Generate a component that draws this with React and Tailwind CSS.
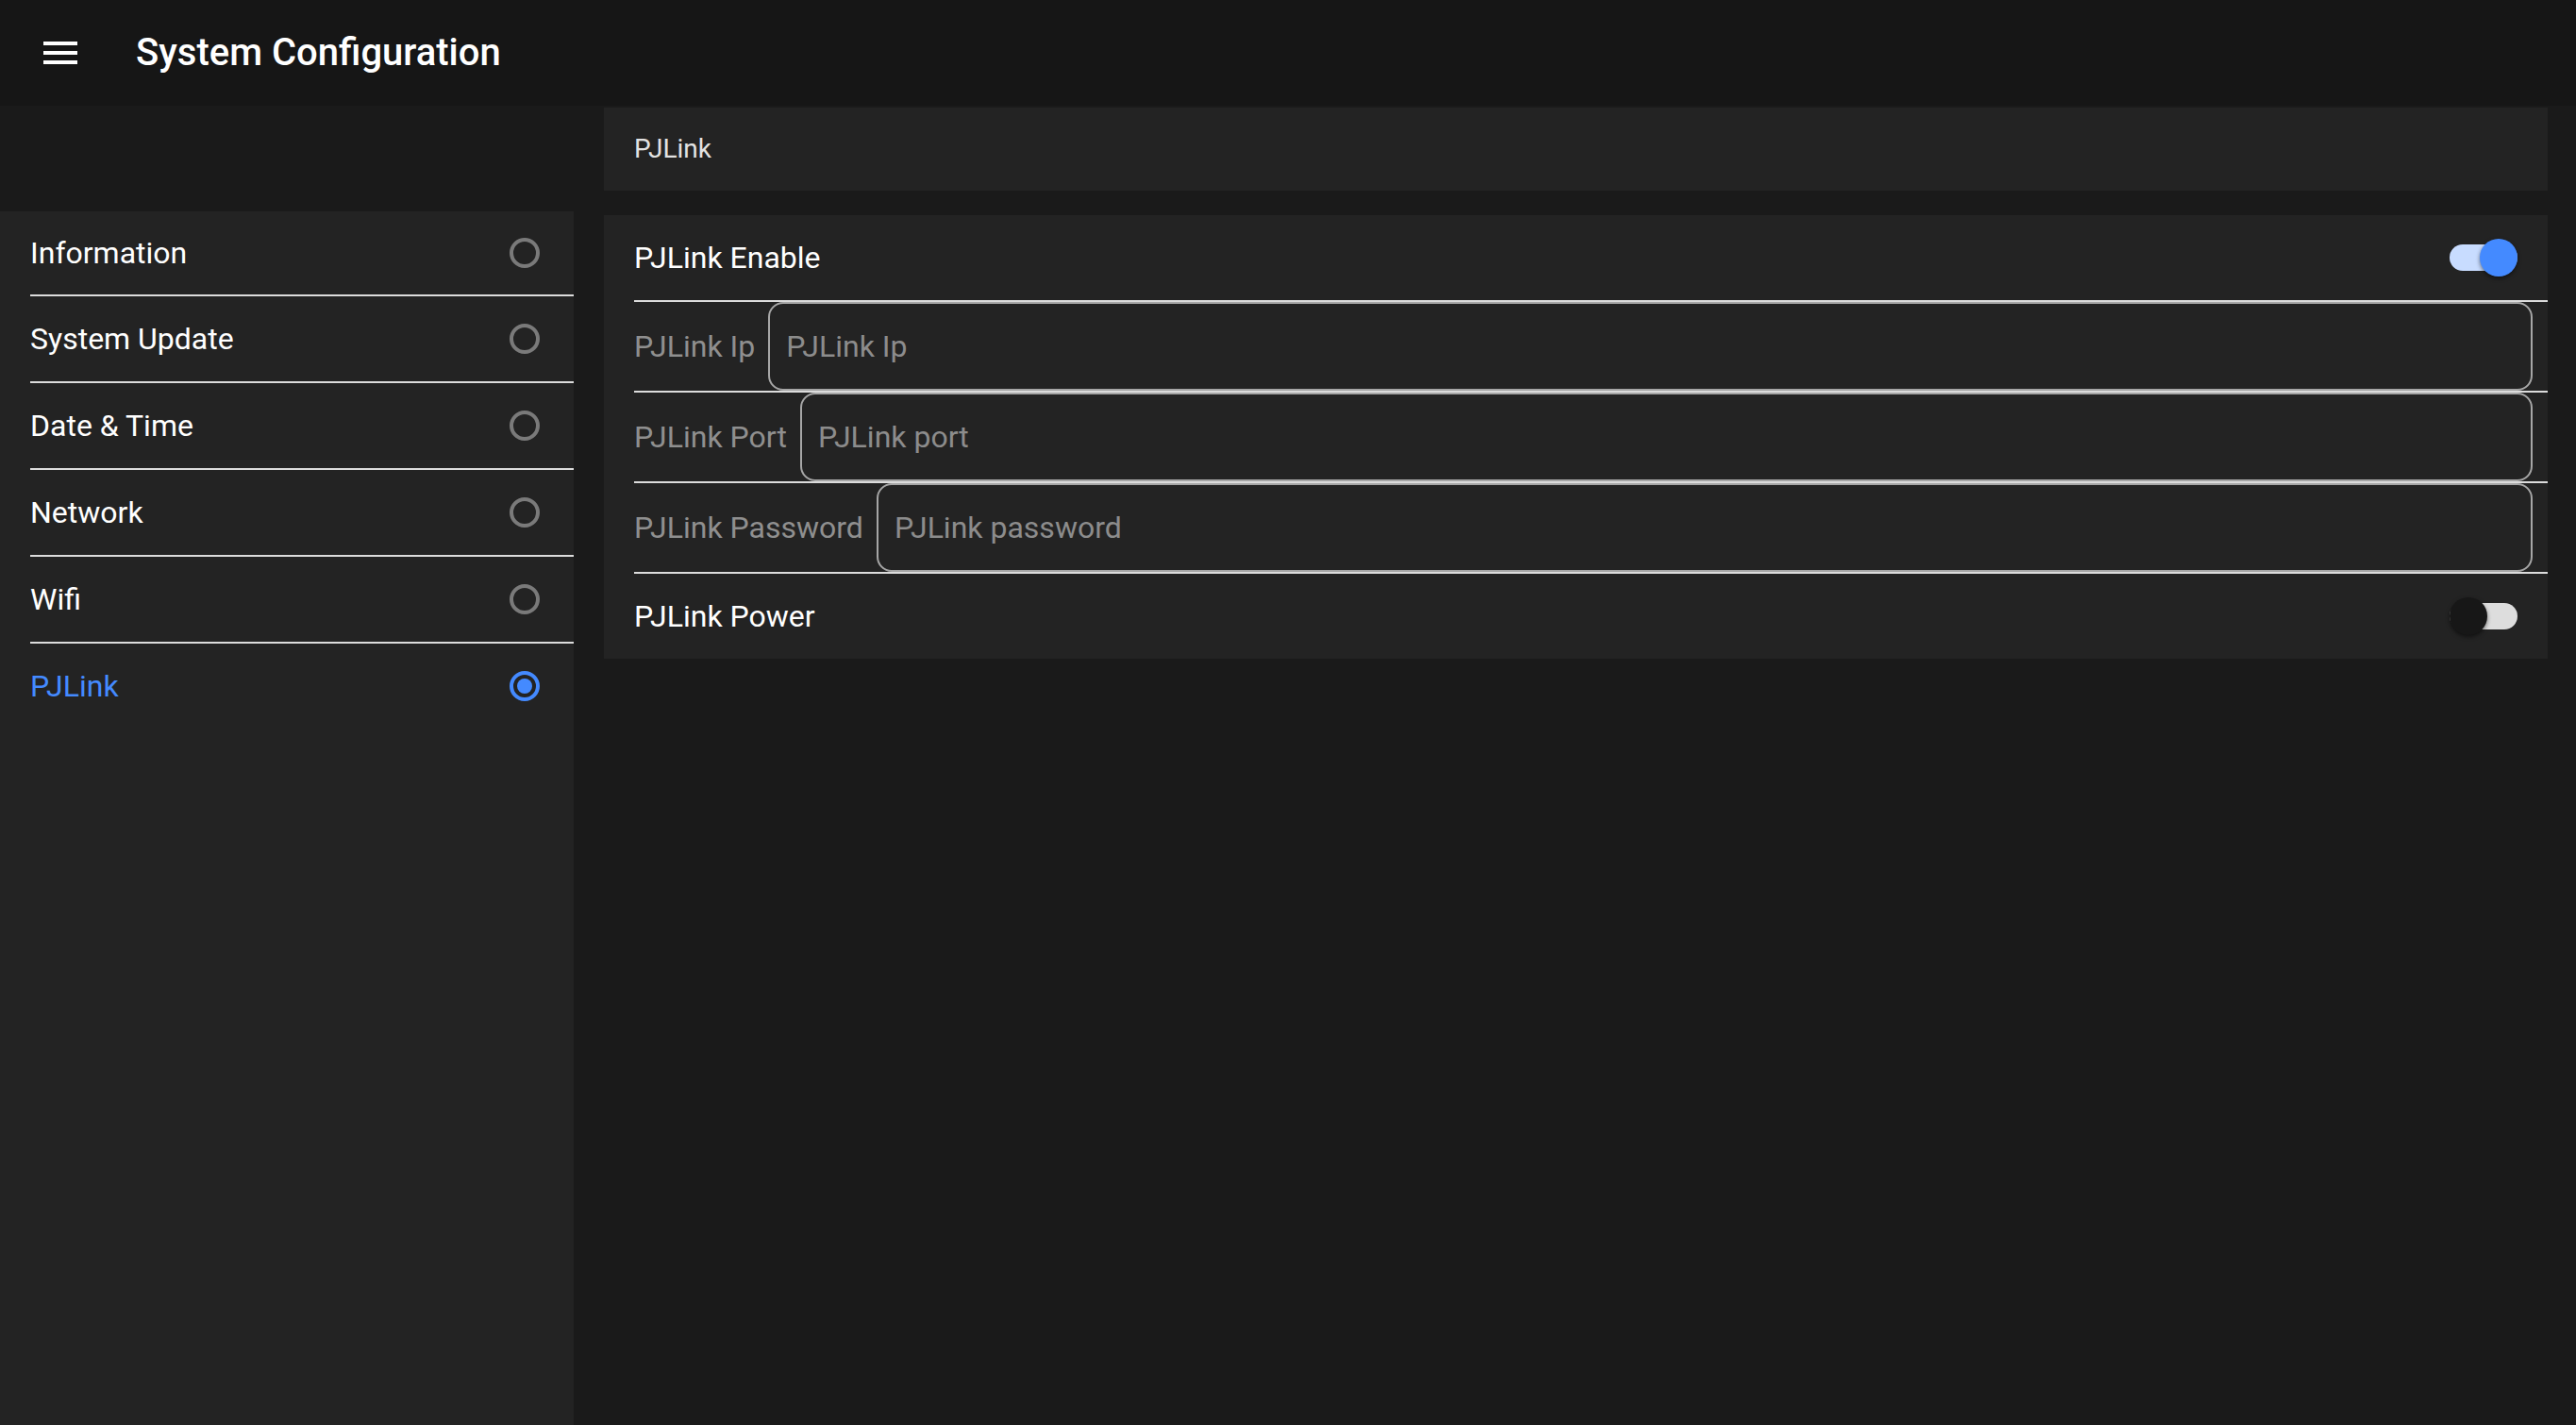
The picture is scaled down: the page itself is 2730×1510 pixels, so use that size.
import { useState } from 'react'

const menuItems = ['Information', 'System Update', 'Date & Time', 'Network', 'Wifi', 'PJLink']

function Radio({ selected }) {
  return (
    <div
      className={`w-[32px] h-[32px] rounded-full border-[4px] flex items-center justify-center ${
        selected ? 'border-[#448aff]' : 'border-[#7a7a7a]'
      }`}
    >
      {selected && <div className="w-[16px] h-[16px] rounded-full bg-[#448aff]" />}
    </div>
  )
}

function Toggle({ on }) {
  return (
    <div className="relative w-[72px] h-[40px] shrink-0">
      <div
        className={`absolute left-0 top-[6px] w-[72px] h-[28px] rounded-full ${
          on ? 'bg-[#c8dcff]' : 'bg-[#dddddd]'
        }`}
      />
      <div
        className={`absolute top-0 w-[40px] h-[40px] rounded-full shadow-[0_2px_4px_rgba(0,0,0,0.5)] ${
          on ? 'right-0 bg-[#448aff]' : 'left-0 bg-[#171717]'
        }`}
      />
    </div>
  )
}

function FieldRow({ label, placeholder }) {
  return (
    <div className="ml-[32px] h-[96px] border-b-2 border-[#dcdcdc] flex items-stretch gap-[14px]">
      <span className="self-center text-[32px] text-[#8f8f8f] whitespace-nowrap">{label}</span>
      <div className="flex-1 mr-[16px] rounded-[16px] border-2 border-[#a6a6a6] flex items-center pl-[17px]">
        <input
          className="w-full bg-transparent outline-none text-[32px] text-white placeholder:text-[#8c8c8c]"
          placeholder={placeholder}
        />
      </div>
    </div>
  )
}

function App() {
  const [selected] = useState('PJLink')

  return (
    <div className="h-screen w-full flex flex-col bg-[#1a1a1a] font-['Roboto','Liberation_Sans',sans-serif] overflow-hidden">
      {/* Header */}
      <div className="h-[112px] shrink-0 bg-[#161616] flex items-center">
        <svg className="ml-[40px] w-[48px] h-[48px]" viewBox="0 0 24 24" fill="#ffffff">
          <path d="M3 18h18v-2H3v2zm0-5h18v-2H3v2zm0-7v2h18V6H3z" />
        </svg>
        <h1 className="ml-[56px] text-[40px] font-medium text-white">System Configuration</h1>
      </div>

      <div className="flex-1 flex">
        {/* Sidebar */}
        <aside className="w-[608px] shrink-0 mt-[112px] bg-[#232323]">
          {menuItems.map((item, i) => {
            const active = item === selected
            const last = i === menuItems.length - 1
            return (
              <div
                key={item}
                className={`ml-[32px] pr-[36px] flex items-center justify-between ${
                  i === 0 ? 'h-[90px]' : last ? 'h-[90px]' : 'h-[92px]'
                } ${last ? '' : 'border-b-2 border-[#dcdcdc]'}`}
              >
                <span className={`text-[32px] ${active ? 'text-[#448aff]' : 'text-white'}`}>{item}</span>
                <Radio selected={active} />
              </div>
            )
          })}
        </aside>

        {/* Content */}
        <main className="flex-1 pl-[32px] pr-[30px] pt-[2px]">
          <div className="h-[88px] bg-[#232323] flex items-center pl-[32px]">
            <span className="text-[28px] text-[#e2e2e2]">PJLink</span>
          </div>

          <div className="mt-[26px] bg-[#232323]">
            <div className="ml-[32px] h-[92px] border-b-2 border-[#dcdcdc] flex items-center justify-between pr-[32px]">
              <span className="text-[32px] text-white">PJLink Enable</span>
              <Toggle on />
            </div>
            <FieldRow label="PJLink Ip" placeholder="PJLink Ip" />
            <FieldRow label="PJLink Port" placeholder="PJLink port" />
            <FieldRow label="PJLink Password" placeholder="PJLink password" />
            <div className="ml-[32px] h-[90px] flex items-center justify-between pr-[32px]">
              <span className="text-[32px] text-white">PJLink Power</span>
              <Toggle on={false} />
            </div>
          </div>
        </main>
      </div>
    </div>
  )
}

export default App
